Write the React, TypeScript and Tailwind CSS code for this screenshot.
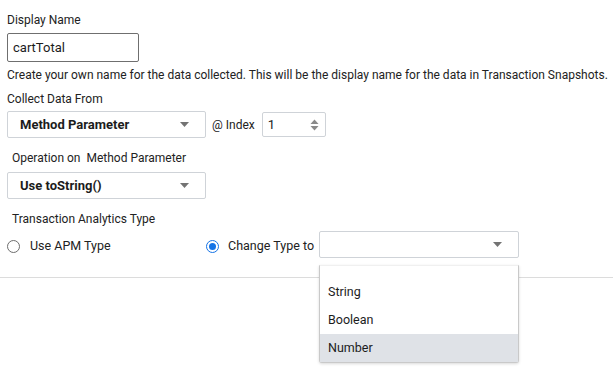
import React from "react";

const Caret = () => (
  <svg width="9" height="5" viewBox="0 0 9 5" className="fill-[#737373]">
    <path d="M0 0h9L4.5 5z" />
  </svg>
);

const Select = ({ value, className }: { value: string; className: string }) => (
  <div
    className={`flex items-center justify-between border border-[#cfd3d8] rounded-[2px] bg-white pl-[12px] pr-[16px] ${className}`}
  >
    <span className="text-[13px] font-bold text-[#1c1c1c]">{value}</span>
    <Caret />
  </div>
);

const Radio = ({ checked }: { checked?: boolean }) =>
  checked ? (
    <span className="w-[13px] h-[13px] rounded-full border-[1.5px] border-[#1473e6] flex items-center justify-center">
      <span className="w-[7px] h-[7px] rounded-full bg-[#1473e6]" />
    </span>
  ) : (
    <span className="w-[13px] h-[13px] rounded-full border border-[#6d6d6d] bg-white" />
  );

export default function App() {
  return (
    <div className="w-[613px] h-[377px] bg-white text-[12px] text-[#222] font-['Roboto',sans-serif] relative">
      <div className="pl-[7px] pt-[12px]">
        <div className="leading-[16px]">Display Name</div>
        <div className="mt-[5px] w-[132px] h-[29px] border border-[#6f6f6f] rounded-[2px] flex items-center pl-[5px] text-[13px] text-[#1c1c1c]">
          cartTotal
        </div>
        <div className="mt-[5px] leading-[16px]">
          Create your own name for the data collected. This will be the display name for the data in Transaction Snapshots.
        </div>
        <div className="mt-[8px] leading-[16px]">Collect Data From</div>
        <div className="mt-[4px] flex items-center">
          <Select value="Method Parameter" className="w-[199px] h-[27px]" />
          <span className="ml-[6px] text-[12px]">@ Index</span>
          <div className="ml-[7px] w-[64px] h-[25px] border border-[#cfd3d8] rounded-[2px] flex items-center justify-between pl-[5px] pr-[6px] text-[13px] text-[#1c1c1c]">
            <span>1</span>
            <svg width="9" height="12" viewBox="0 0 9 12" className="fill-[#8a8a8a]">
              <path d="M0.5 5L4.5 0.5L8.5 5z" />
              <path d="M0.5 7L4.5 11.5L8.5 7z" />
            </svg>
          </div>
        </div>
        <div className="mt-[12px] pl-[5px] leading-[16px]">
          Operation on&nbsp; Method Parameter
        </div>
        <div className="mt-[6px]">
          <Select value="Use toString()" className="w-[199px] h-[27px]" />
        </div>
        <div className="mt-[12px] pl-[5px] leading-[16px]">Transaction Analytics Type</div>
        <div className="mt-[4px] flex items-center h-[27px]">
          <div className="flex items-center w-[199px] pt-[3px]">
            <Radio />
            <span className="ml-[10px] text-[12.5px]">Use APM Type</span>
          </div>
          <div className="flex items-center w-[113px] pt-[3px]">
            <Radio checked />
            <span className="ml-[9px] text-[12.5px]">Change Type to</span>
          </div>
          <div className="w-[200px] h-[27px] border border-[#cfd3d8] rounded-[2px] flex items-center justify-end pr-[16px]">
            <Caret />
          </div>
        </div>
      </div>
      <div className="mt-[19px] border-t border-[#dcdcdc]" />

      <div className="absolute left-[319px] top-[265px] w-[200px] h-[98px] bg-white border border-[#c9c9c9] border-t-[#f0f0f0] rounded-b-[3px] shadow-[0_1px_3px_rgba(0,0,0,0.15)] flex flex-col justify-end text-[12.5px] text-[#1c1c1c]">
        <div className="h-[28px] flex items-center pl-[8px]">String</div>
        <div className="h-[28px] flex items-center pl-[8px]">Boolean</div>
        <div className="h-[28px] flex items-center pl-[8px] bg-[#dfe2e7]">Number</div>
      </div>
    </div>
  );
}
